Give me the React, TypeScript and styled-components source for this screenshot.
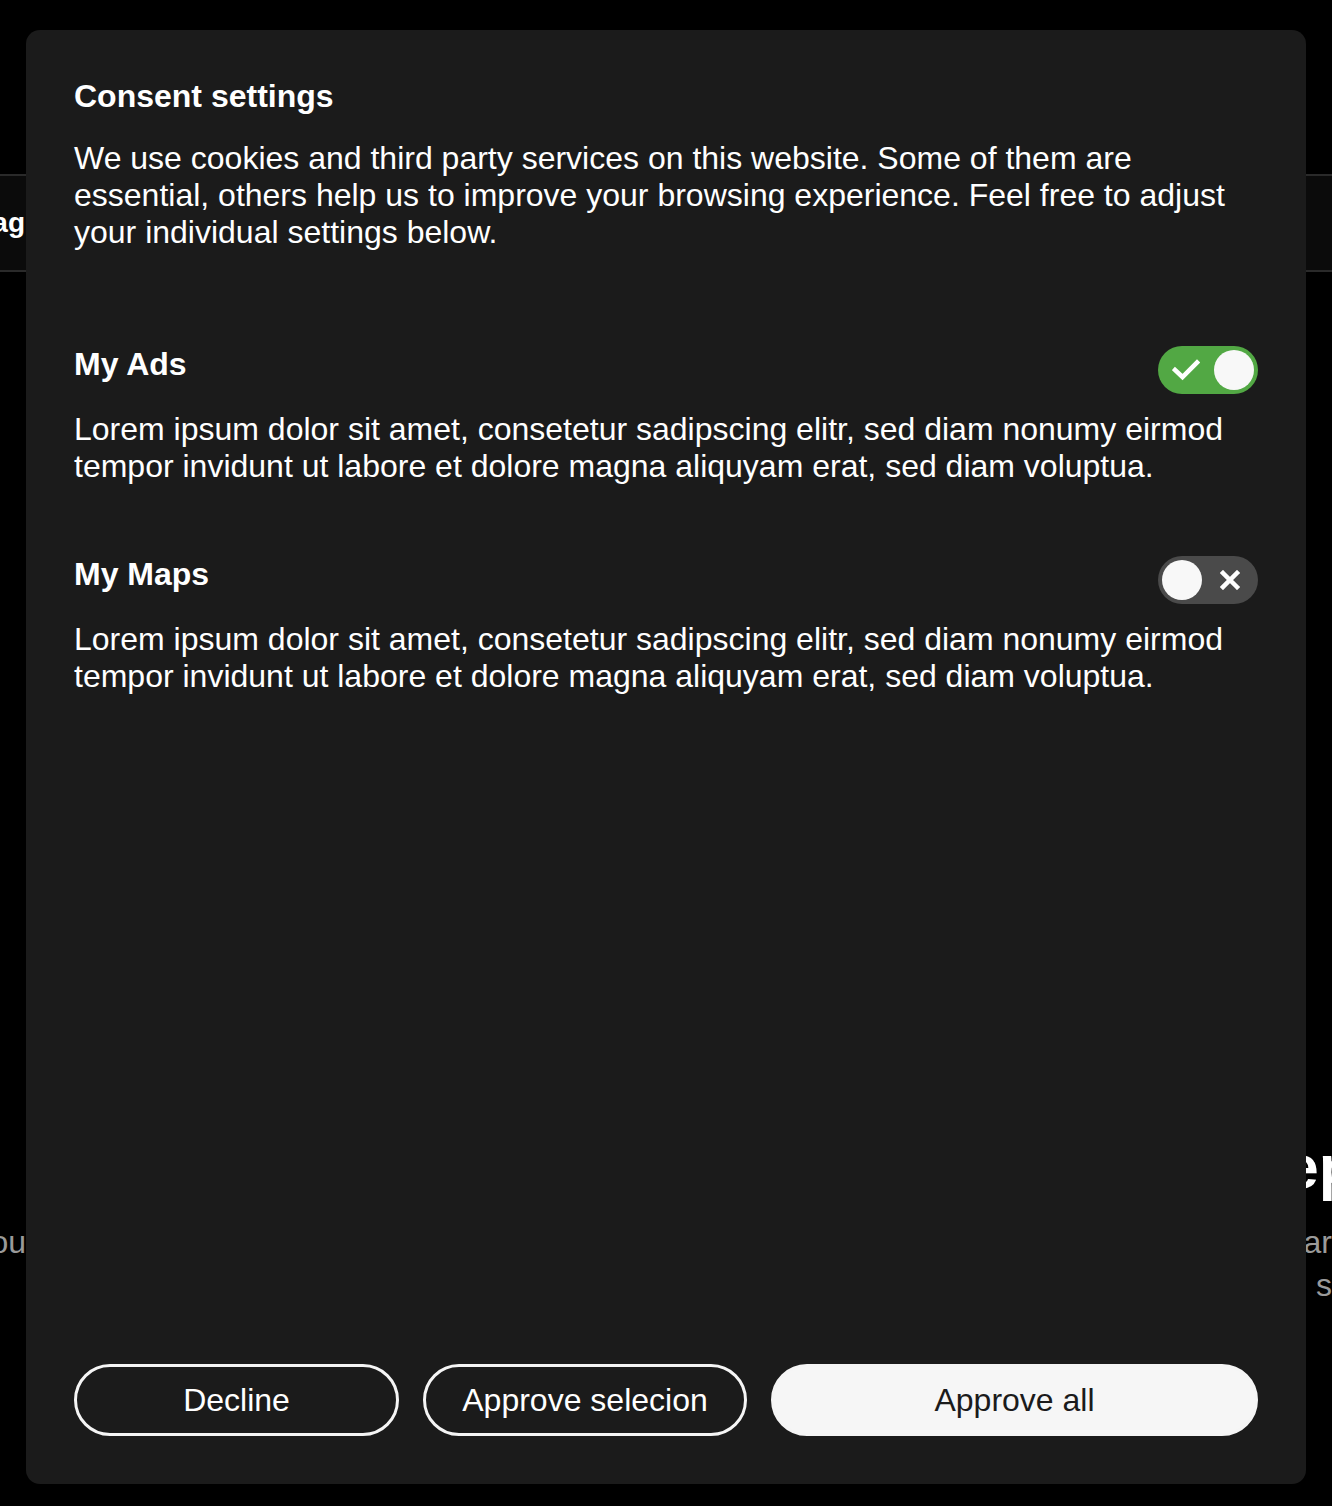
import React, { useState } from 'react';
import styled, { createGlobalStyle } from 'styled-components';

const GlobalStyle = createGlobalStyle`
  html, body {
    margin: 0;
    padding: 0;
    background: #000;
    overflow: hidden;
    font-family: "Liberation Sans", Arial, sans-serif;
  }
`;

interface Service {
  id: string;
  name: string;
  description: string;
}

const services: Service[] = [
  {
    id: 'ads',
    name: 'My Ads',
    description:
      'Lorem ipsum dolor sit amet, consetetur sadipscing elitr, sed diam nonumy eirmod tempor invidunt ut labore et dolore magna aliquyam erat, sed diam voluptua.',
  },
  {
    id: 'maps',
    name: 'My Maps',
    description:
      'Lorem ipsum dolor sit amet, consetetur sadipscing elitr, sed diam nonumy eirmod tempor invidunt ut labore et dolore magna aliquyam erat, sed diam voluptua.',
  },
];

const CheckIcon = () => (
  <svg width="28" height="22" viewBox="0 0 28 22" fill="none">
    <path d="M3 11 L10.5 18 L25 3.5" stroke="#fff" strokeWidth="4.5" strokeLinecap="square" />
  </svg>
);

const CrossIcon = () => (
  <svg width="20" height="20" viewBox="0 0 20 20" fill="none">
    <path d="M3 3 L17 17 M17 3 L3 17" stroke="#fff" strokeWidth="4.5" strokeLinecap="square" />
  </svg>
);

const App: React.FC = () => {
  const [enabled, setEnabled] = useState<Record<string, boolean>>({ ads: true, maps: false });

  const toggle = (id: string) => setEnabled((prev) => ({ ...prev, [id]: !prev[id] }));

  return (
    <>
      <GlobalStyle />
      <Page>
        <Header>
          <HeaderEdge>
            <HeaderLabel>Tag</HeaderLabel>
          </HeaderEdge>
        </Header>
        <Hero>
          <HeroLeft>
            <HeroText>Made for you</HeroText>
          </HeroLeft>
          <HeroRight>
            <HeroTitle>Keep</HeroTitle>
            <HeroText>Be clear</HeroText>
            <HeroText>Keep it open s</HeroText>
          </HeroRight>
        </Hero>
      </Page>

      <Overlay>
        <Modal>
          <Title>Consent settings</Title>
          <Intro>
            We use cookies and third party services on this website. Some of them are essential, others
            help us to improve your browsing experience. Feel free to adjust your individual settings
            below.
          </Intro>

          <ServiceList>
            {services.map((service) => (
              <ServiceItem key={service.id}>
                <ServiceHead>
                  <ServiceName>{service.name}</ServiceName>
                  <Switch
                    type="button"
                    $on={enabled[service.id]}
                    aria-pressed={enabled[service.id]}
                    onClick={() => toggle(service.id)}
                  >
                    {enabled[service.id] ? (
                      <>
                        <SwitchIcon><CheckIcon /></SwitchIcon>
                        <Knob />
                      </>
                    ) : (
                      <>
                        <Knob />
                        <SwitchIcon><CrossIcon /></SwitchIcon>
                      </>
                    )}
                  </Switch>
                </ServiceHead>
                <ServiceText>{service.description}</ServiceText>
              </ServiceItem>
            ))}
          </ServiceList>

          <Actions>
            <ActionButton type="button">Decline</ActionButton>
            <ActionButton type="button">Approve selecion</ActionButton>
            <ActionButton type="button" $primary>
              Approve all
            </ActionButton>
          </Actions>
        </Modal>
      </Overlay>
    </>
  );
};

const Page = styled.div`
  min-height: 1506px;
  display: flex;
  flex-direction: column;
`;

const Header = styled.header`
  margin-top: 174px;
  height: 94px;
  display: flex;
  align-items: center;
  background: #0b0b0b;
  border-top: 2px solid #2a2a2a;
  border-bottom: 2px solid #2a2a2a;
`;

const HeaderEdge = styled.div`
  width: 25px;
  display: flex;
  justify-content: flex-end;
`;

const HeaderLabel = styled.span`
  font-size: 28px;
  font-weight: 700;
  color: #fff;
  white-space: nowrap;
`;

const Hero = styled.section`
  margin-top: 859px;
  display: flex;
  justify-content: space-between;
`;

const HeroLeft = styled.div`
  width: 26px;
  padding-top: 90px;
  display: flex;
  flex-direction: column;
`;

const HeroRight = styled.div`
  width: 127px;
  display: flex;
  flex-direction: column;
`;

const HeroTitle = styled.h2`
  margin: 0 0 18px;
  font-size: 62px;
  line-height: 72px;
  font-weight: 700;
  color: #fff;
  white-space: nowrap;
`;

const HeroText = styled.p`
  margin: 0;
  display: flex;
  justify-content: flex-end;
  font-size: 32px;
  line-height: 43px;
  color: #9a9a9a;
  white-space: nowrap;
`;

const Overlay = styled.div`
  position: fixed;
  inset: 0;
  padding: 30px 26px 22px;
  display: flex;
`;

const Modal = styled.div`
  flex: 1;
  display: flex;
  flex-direction: column;
  padding: 48px;
  background: #1b1b1b;
  border-radius: 14px;
  color: #fff;
`;

const Title = styled.h1`
  margin: 0;
  font-size: 32px;
  line-height: 37px;
  font-weight: 700;
`;

const Intro = styled.p`
  margin: 25px 0 0;
  font-size: 32px;
  line-height: 37px;
`;

const ServiceList = styled.div`
  margin-top: 95px;
  display: flex;
  flex-direction: column;
  gap: 71px;
`;

const ServiceItem = styled.div`
  display: flex;
  flex-direction: column;
  gap: 17px;
`;

const ServiceHead = styled.div`
  display: flex;
  align-items: flex-start;
  justify-content: space-between;
`;

const ServiceName = styled.h2`
  margin: 0;
  font-size: 32px;
  line-height: 37px;
  font-weight: 700;
`;

const ServiceText = styled.p`
  margin: 0;
  font-size: 32px;
  line-height: 37px;
`;

const Switch = styled.button<{ $on: boolean }>`
  width: 100px;
  height: 48px;
  padding: 0 4px;
  border: none;
  border-radius: 24px;
  background: ${(p) => (p.$on ? '#52a844' : '#4a4a4a')};
  display: flex;
  align-items: center;
  justify-content: space-between;
  cursor: pointer;
`;

const Knob = styled.span`
  width: 40px;
  height: 40px;
  border-radius: 50%;
  background: #f8f8f8;
`;

const SwitchIcon = styled.span`
  width: 48px;
  display: flex;
  align-items: center;
  justify-content: center;
`;

const Actions = styled.div`
  margin-top: auto;
  display: grid;
  grid-template-columns: 325px 324px 1fr;
  gap: 24px;
`;

const ActionButton = styled.button<{ $primary?: boolean }>`
  height: 72px;
  border: 3px solid #f5f5f5;
  border-radius: 36px;
  background: ${(p) => (p.$primary ? '#f6f6f6' : 'transparent')};
  color: ${(p) => (p.$primary ? '#1b1b1b' : '#fff')};
  font-family: "Liberation Sans", Arial, sans-serif;
  font-size: 32px;
  cursor: pointer;
`;

export default App;
